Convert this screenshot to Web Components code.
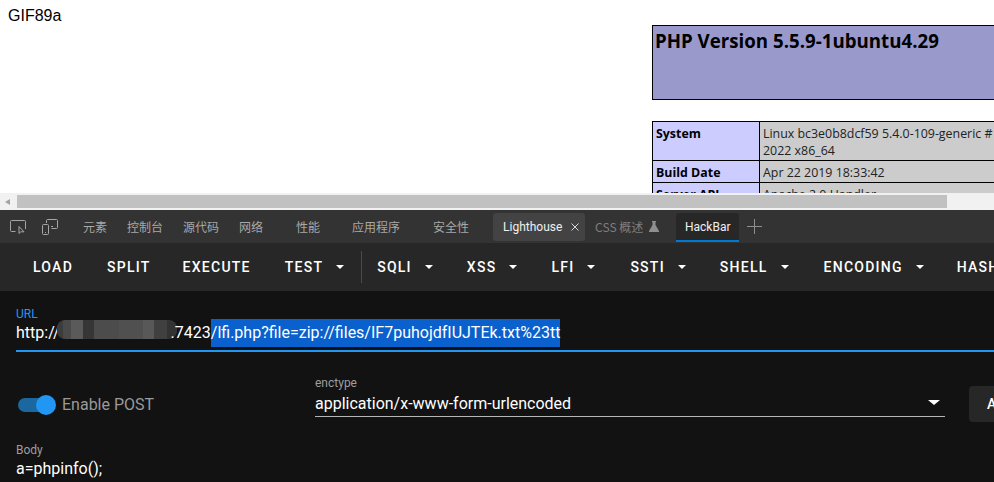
<!DOCTYPE html>
<html lang="zh">
<head>
<meta charset="utf-8">
<title>HackBar</title>
<style>
  html, body { margin: 0; height: 100%; overflow: hidden; background: #fff; }
  body { display: flex; flex-direction: column; height: 482px; }
</style>
</head>
<body>
<page-view></page-view>
<page-scrollbar></page-scrollbar>
<dev-tabs>
  <dev-tab style="margin-left:25px">元素</dev-tab>
  <dev-tab style="margin-left:20px">控制台</dev-tab>
  <dev-tab style="margin-left:20px">源代码</dev-tab>
  <dev-tab style="margin-left:20px">网络</dev-tab>
  <dev-tab style="margin-left:33px">性能</dev-tab>
  <dev-tab style="margin-left:32px">应用程序</dev-tab>
  <dev-tab style="margin-left:33px">安全性</dev-tab>
  <dev-tab kind="pinned" style="margin-left:24px">Lighthouse</dev-tab>
  <dev-tab kind="lab" style="margin-left:10px">CSS 概述</dev-tab>
  <dev-tab kind="active" style="margin-left:17px">HackBar</dev-tab>
</dev-tabs>
<hack-toolbar>
  <hack-btn>LOAD</hack-btn>
  <hack-btn style="margin-right:-2px">SPLIT</hack-btn>
  <hack-btn>EXECUTE</hack-btn>
  <hack-btn menu>TEST</hack-btn>
  <span class="sep" style="margin-right:-3px"></span>
  <hack-btn menu style="margin-right:1px">SQLI</hack-btn>
  <hack-btn menu style="margin-right:1px">XSS</hack-btn>
  <hack-btn menu style="margin-right:2px">LFI</hack-btn>
  <hack-btn menu style="margin-right:1px">SSTI</hack-btn>
  <hack-btn menu style="margin-right:2px">SHELL</hack-btn>
  <hack-btn menu>ENCODING</hack-btn>
  <hack-btn menu>HASHING</hack-btn>
</hack-toolbar>
<hack-form></hack-form>

<script>
  "use strict";

  class PageView extends HTMLElement {
    constructor() {
      super()
      this.attachShadow({ mode: 'open' })
      this.shadowRoot.innerHTML = `
      <style>
        :host { display: flex; height: 193px; overflow: hidden; background: #fff; color: #000; }
        .gif { width: 644px; flex: none; padding: 8px 0 0 8px; box-sizing: content-box; font: 16px/15px "Liberation Sans", sans-serif; }
        .info { flex: none; width: 360px; margin-top: 25px; font-family: "Open Sans", sans-serif; }
        .head { height: 73px; border: 1px solid #000; background: #9999cc; }
        h1 { margin: 0; padding: 2px 2px 0; font-size: 18.7px; line-height: 26px; font-weight: 700; }
        table { margin-top: 21px; border-collapse: collapse; width: 360px; table-layout: fixed; font-size: 12.4px; line-height: 17px; }
        td { border: 1px solid #000; padding: 3px 3px 1px; vertical-align: top; white-space: nowrap; overflow: hidden; }
        .e { width: 100px; background: #ccccff; font-weight: 700; }
        .v { background: #cccccc; color: #222; }
      </style>
      <div class="gif">GIF89a</div>
      <div class="info">
        <div class="head"><h1>PHP Version 5.5.9-1ubuntu4.29</h1></div>
        <table>
          <tr><td class="e">System</td><td class="v">Linux bc3e0b8dcf59 5.4.0-109-generic #<br>2022 x86_64</td></tr>
          <tr><td class="e">Build Date</td><td class="v">Apr 22 2019 18:33:42</td></tr>
          <tr><td class="e">Server API</td><td class="v">Apache 2.0 Handler</td></tr>
        </table>
      </div>`
    }
  }

  class PageScrollbar extends HTMLElement {
    constructor() {
      super()
      this.attachShadow({ mode: 'open' })
      this.shadowRoot.innerHTML = `
      <style>
        :host { display: flex; align-items: center; height: 17px; background: #f1f1f1; }
        .arrow { width: 0; height: 0; margin: 0 5px 0 5px; border: 3.5px solid transparent; border-left: 0; border-right: 5px solid #a3a3a3; }
        .thumb { width: 930px; height: 13px; margin-left: 2px; background: #c1c1c1; }
      </style>
      <span class="arrow"></span><span class="thumb"></span>`
    }
  }

  class DevTabs extends HTMLElement {
    constructor() {
      super()
      this.attachShadow({ mode: 'open' })
      this.shadowRoot.innerHTML = `
      <style>
        :host { display: flex; align-items: center; height: 33px; flex: none; padding-left: 10px; background: #333; }
        svg { display: block; flex: none; fill: none; stroke: #a6a6a6; stroke-width: 1; }
        .device { margin-left: 16px; }
        .plus { margin-left: 8px; stroke: #8f8f8f; }
      </style>
      <svg width="16" height="16" viewBox="0 0 16 16"><path d="M5.500 12.500H1.500a1 1 0 0 1-1-1V2.500a1 1 0 0 1 1-1h13a1 1 0 0 1 1 1V10"/><path d="M9 7.500v7l1.800-1.700h3.200z"/></svg>
      <svg class="device" width="16" height="16" viewBox="0 0 16 16"><path d="M4.500 4V1.500a1 1 0 0 1 1-1h9a1 1 0 0 1 1 1v7a1 1 0 0 1-1 1h-5M9 7.500h2"/><rect x=".5" y="5.500" width="6" height="10" rx="1"/><path d="M3 13.500h1"/></svg>
      <slot></slot>
      <svg class="plus" width="15" height="15" viewBox="0 0 15 15"><path d="M7.500 0v15M0 7.500h15"/></svg>`
    }
  }

  class DevTab extends HTMLElement {
    constructor() {
      super()
      const kind = this.getAttribute('kind') || ''
      const close = kind === 'pinned'
        ? '<svg width="8" height="8" viewBox="0 0 8 8"><path fill="none" stroke="#d8d8d8" d="M.5.500l7 7M7.500.500l-7 7"/></svg>'
        : ''
      const flask = kind === 'lab'
        ? '<svg width="10" height="11" viewBox="0 0 10 11"><path fill="#8f8f8f" d="M3 0h4v1H6.500v3L10 10a.700.700 0 0 1-.600 1H.600A.700.700 0 0 1 0 10l3.500-6V1H3z"/></svg>'
        : ''
      this.attachShadow({ mode: 'open' })
      this.shadowRoot.innerHTML = `
      <style>
        :host { display: flex; align-items: center; gap: 6px; flex: none; font: 12px/16px "Noto Sans CJK SC", "Noto Sans", sans-serif; color: #a8a8a8; }
        :host([kind=pinned]) { height: 28px; width: 92px; box-sizing: border-box; padding: 0 6px 0 10px; gap: 0; justify-content: space-between; border-radius: 3px; background: #434343; color: #f0f0f0; font-family: Roboto, sans-serif; }
        :host([kind=lab]) { color: #7f7f7f; }
        :host([kind=active]) { height: 29px; width: 63px; box-sizing: border-box; justify-content: center; align-self: flex-start; margin-top: 3px; border-bottom: 2px solid #0078d4; border-radius: 3px 3px 0 0; background: #272727; color: #f0f0f0; font-family: Roboto, sans-serif; }
      </style>
      <slot></slot>${close}${flask}`
    }
  }

  class HackToolbar extends HTMLElement {
    constructor() {
      super()
      this.attachShadow({ mode: 'open' })
      this.shadowRoot.innerHTML = `
      <style>
        :host { display: flex; align-items: center; flex: none; height: 48px; padding-left: 17px; gap: 2px; background: #272727; white-space: nowrap; overflow: hidden; }
        ::slotted(.sep) { display: block; flex: none; width: 1px; height: 32px; background: #4a4a4a; }
      </style>
      <slot></slot>`
    }
  }

  class HackBtn extends HTMLElement {
    constructor() {
      super()
      const caret = this.hasAttribute('menu') ? '<span class="caret"></span>' : ''
      this.attachShadow({ mode: 'open' })
      this.shadowRoot.innerHTML = `
      <style>
        :host { display: flex; align-items: center; flex: none; height: 36px; padding: 0 16px; font: 500 14px/16px Roboto, sans-serif; letter-spacing: 1.25px; color: #fff; }
        .caret { width: 0; height: 0; margin-left: 13px; margin-right: -1px; border: 4px solid transparent; border-top: 4px solid #fff; border-bottom: 0; }
      </style>
      <slot></slot>${caret}`
    }
  }

  class TextField extends HTMLElement {
    constructor() {
      super()
      const label = this.getAttribute('label') || ''
      this.attachShadow({ mode: 'open' })
      this.shadowRoot.innerHTML = `
      <style>
        :host { display: block; color: #fff; font-family: Roboto, sans-serif; }
        .label { font-size: 12px; line-height: 14px; color: #9e9e9e; }
        :host([focused]) .label { color: #2196f3; }
        .value { display: flex; align-items: center; font-size: 16px; line-height: 24px; white-space: nowrap; overflow: hidden; }
        :host([underline]) .value { border-bottom: 1px solid #b5b5b5; }
        :host([focused]) .value { margin-top: -2px; height: 33px; box-sizing: border-box; padding-bottom: 3px; border-bottom: 2px solid #2196f3; line-height: 28px; }
        :host([select]) .value { height: 25px; padding-top: 1px; }
        .grow { flex: 1; min-width: 0; }
        .caret { width: 0; height: 0; margin: 0 5px 3px 0; border: 6px solid transparent; border-top: 5px solid #fff; border-bottom: 0; }
      </style>
      <div class="label">${label}</div>
      <div class="value"><span class="grow"><slot></slot></span>${this.hasAttribute('select') ? '<span class="caret"></span>' : ''}</div>`
    }
  }

  class PostSwitch extends HTMLElement {
    constructor() {
      super()
      this.attachShadow({ mode: 'open' })
      this.shadowRoot.innerHTML = `
      <style>
        :host { display: flex; align-items: center; font: 16px/24px Roboto, sans-serif; color: #9a9a9a; }
        .track { position: relative; width: 36px; height: 14px; margin-right: 8px; border-radius: 7px; background: #1b679f; }
        .thumb { position: absolute; right: -2px; top: -3px; width: 20px; height: 20px; border-radius: 50%; background: #2196f3; }
      </style>
      <span class="track"><span class="thumb"></span></span><slot></slot>`
    }
  }

  class MaskedBlur extends HTMLElement {
    constructor() {
      super()
      this.attachShadow({ mode: 'open' })
      this.shadowRoot.innerHTML = `
      <style>
        :host { display: inline-block; width: 120px; height: 19px; margin: 0 -6px 0 -3px; vertical-align: -1px; border-radius: 8px; filter: blur(.6px); background: linear-gradient(90deg,
          #3c3c3c 0 6px, #4a4a4a 6px 14px, #5a5a5a 14px 26px, #363636 26px 37px, #4c4c4c 37px 62px, #505050 62px 86px, #585858 86px 97px, #404040 97px 110px, #333 110px 120px); }
      </style>`
    }
  }

  class HackForm extends HTMLElement {
    constructor() {
      super()
      this.attachShadow({ mode: 'open' })
      this.shadowRoot.innerHTML = `
      <style>
        :host { display: block; flex: 1; box-sizing: border-box; padding: 16px 0 0 16px; background: #121212; overflow: hidden; }
        .sel { display: inline-block; background: #0a60cc; color: #fff; }
        .over { position: relative; }
        .row { display: flex; align-items: flex-end; margin-top: 24px; }
        post-switch { flex: none; width: 297px; margin-left: 2px; }
        text-field[select] { width: 630px; flex: none; }
        .apply { flex: none; margin-left: 24px; width: 80px; height: 36px; margin-bottom: -5px; padding-left: 18px; box-sizing: border-box; border-radius: 4px; background: #272727; color: #fff; font: 500 14px/36px Roboto, sans-serif; letter-spacing: 1.25px; }
        .body { margin-top: 26px; }
      </style>
      <text-field label="URL" focused>http://<masked-blur></masked-blur><span class="over">.7423</span><span class="sel">/lfi.php?file=zip://files/IF7puhojdfIUJTEk.txt%23tt</span></text-field>
      <div class="row">
        <post-switch>Enable POST</post-switch>
        <text-field label="enctype" select underline>application/x-www-form-urlencoded</text-field>
        <div class="apply">APPLY</div>
      </div>
      <text-field class="body" label="Body">a=phpinfo();</text-field>`
    }
  }

  customElements.define('page-view', PageView)
  customElements.define('page-scrollbar', PageScrollbar)
  customElements.define('dev-tabs', DevTabs)
  customElements.define('dev-tab', DevTab)
  customElements.define('hack-toolbar', HackToolbar)
  customElements.define('hack-btn', HackBtn)
  customElements.define('text-field', TextField)
  customElements.define('post-switch', PostSwitch)
  customElements.define('masked-blur', MaskedBlur)
  customElements.define('hack-form', HackForm)
</script>
</body>
</html>
